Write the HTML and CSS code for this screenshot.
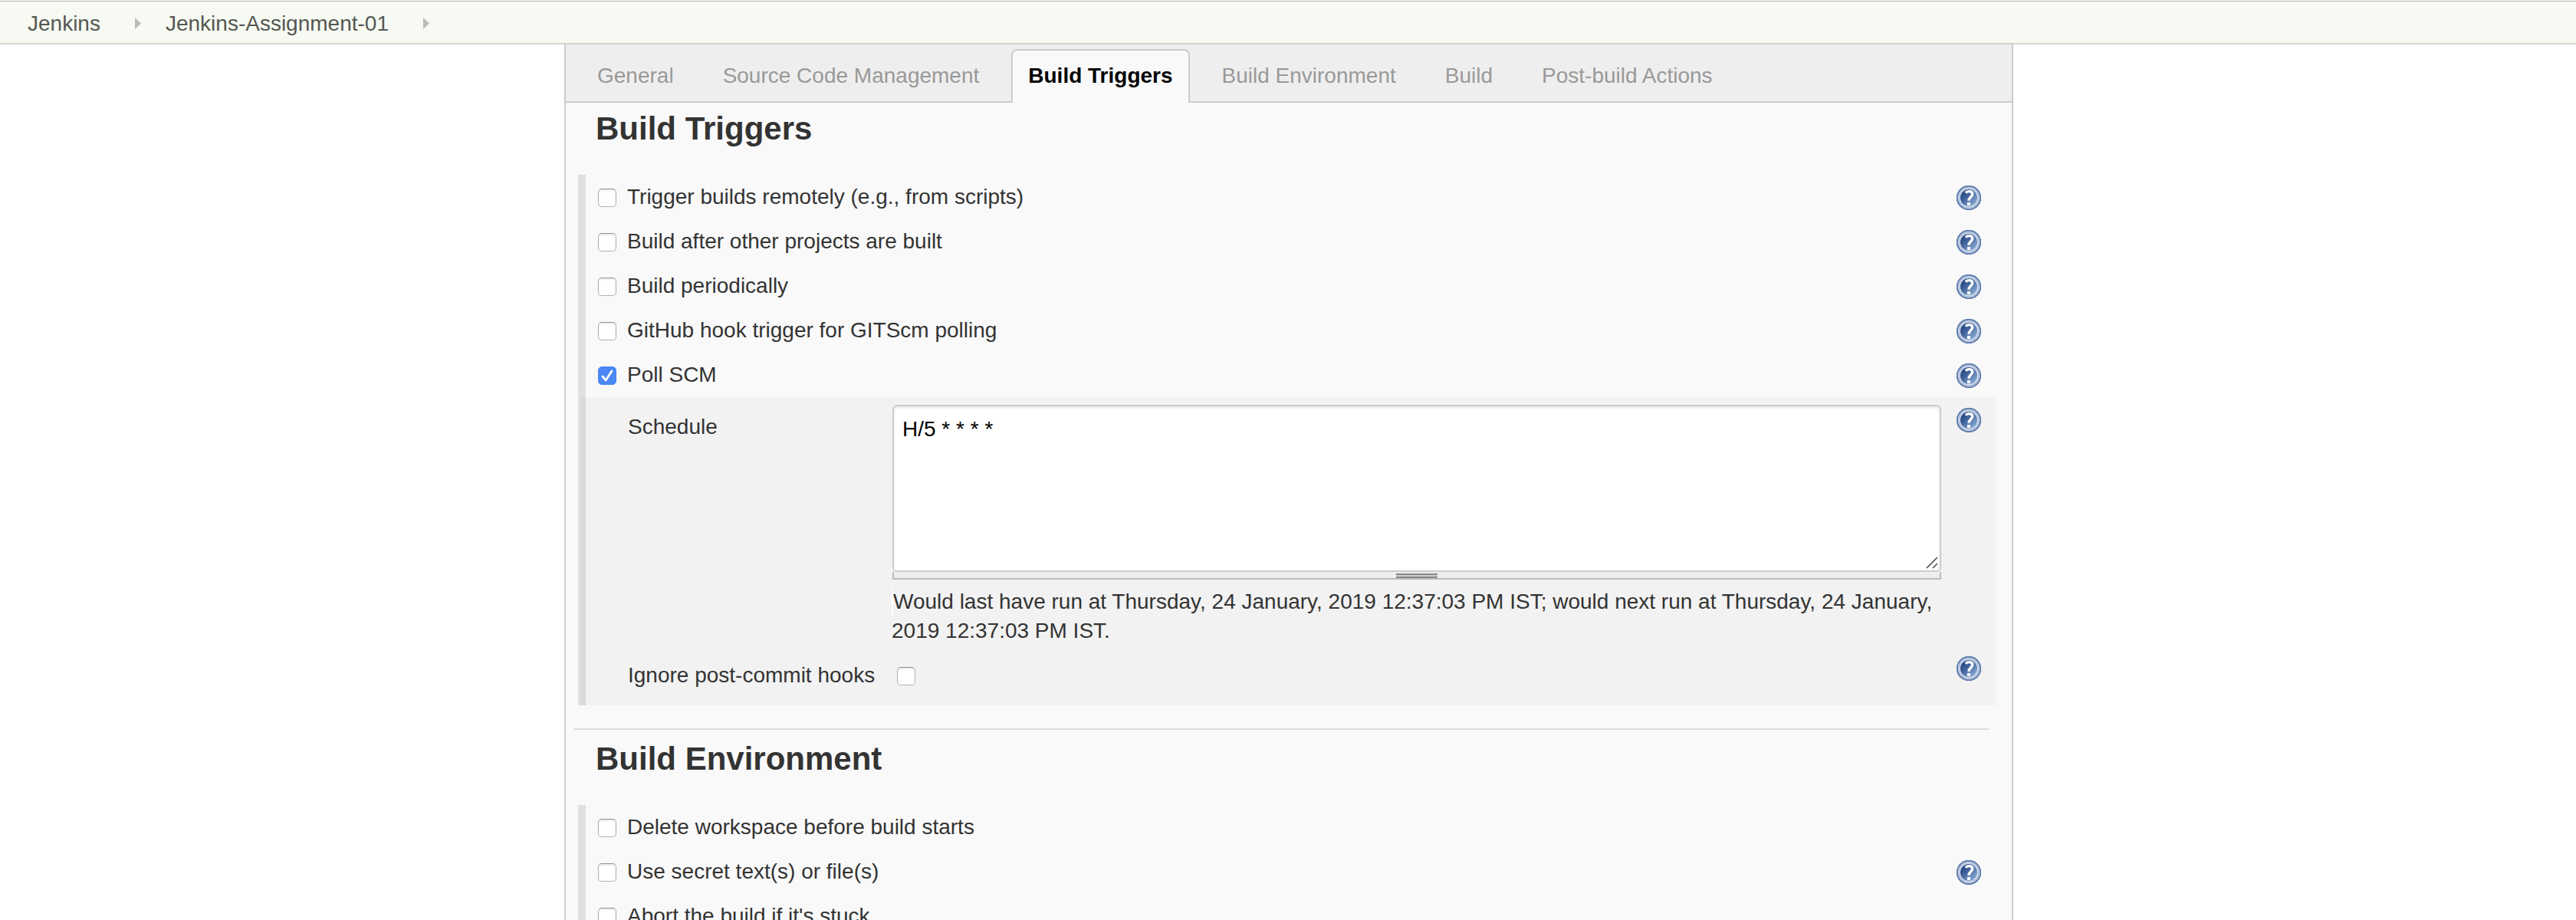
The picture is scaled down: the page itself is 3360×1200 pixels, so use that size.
FILE: index.html
```html
<!DOCTYPE html>
<html lang="en">
<head>
<meta charset="utf-8">
<title>Jenkins-Assignment-01 Config [Jenkins]</title>
<link rel="stylesheet" href="styles.css">
</head>
<body>
<svg class="defs" width="0" height="0" aria-hidden="true">
  <defs>
    <linearGradient id="blue" x1="0.1" y1="0.1" x2="0.9" y2="0.9">
      <stop offset="0" stop-color="#20427f"/>
      <stop offset="0.35" stop-color="#3d5f99"/>
      <stop offset="1" stop-color="#8caed6"/>
    </linearGradient>
    <symbol id="help" viewBox="0 0 32 32">
      <circle cx="16" cy="16" r="16.300" fill="#5d7bae"/>
      <circle cx="16" cy="16" r="14.300" fill="#c9d4e5"/>
      <circle cx="16" cy="16" r="13.200" fill="#8ea5c9"/>
      <circle cx="16" cy="16" r="12.500" fill="#dde5f0"/>
      <circle cx="16" cy="16" r="11.100" fill="url(#blue)"/>
      <path d="M12 9.800C14 6.800 20.800 6.800 20.800 11C20.800 14.600 16 15 16 19.800" fill="none" stroke="#fff" stroke-width="3.400"/>
      <rect x="13.900" y="22" width="4.200" height="4" rx="1" fill="#fff"/>
    </symbol>
    <symbol id="crumb" viewBox="0 0 8 15"><path d="M0 0L8 7.500L0 15Z" fill="#babdb6"/></symbol>
  </defs>
</svg>
<nav class="breadcrumbs">
  <a class="crumb">Jenkins</a>
  <svg class="arrow"><use href="#crumb"/></svg>
  <a class="crumb">Jenkins-Assignment-01</a>
  <svg class="arrow"><use href="#crumb"/></svg>
</nav>
<main class="panel">
  <div class="tabs">
    <a class="tab">General</a>
    <a class="tab">Source Code Management</a>
    <a class="tab active">Build Triggers</a>
    <a class="tab">Build Environment</a>
    <a class="tab">Build</a>
    <a class="tab">Post-build Actions</a>
  </div>
  <section class="section">
    <h2 class="title">Build Triggers</h2>
    <div class="group">
      <div class="row"><span class="check"></span><span class="label">Trigger builds remotely (e.g., from scripts)</span><svg class="help"><use href="#help"/></svg></div>
      <div class="row"><span class="check"></span><span class="label">Build after other projects are built</span><svg class="help"><use href="#help"/></svg></div>
      <div class="row"><span class="check"></span><span class="label">Build periodically</span><svg class="help"><use href="#help"/></svg></div>
      <div class="row"><span class="check"></span><span class="label">GitHub hook trigger for GITScm polling</span><svg class="help"><use href="#help"/></svg></div>
      <div class="row"><span class="check checked"><svg class="tick" viewBox="0 0 24 24"><path d="M6 13L10.200 18L18 6" fill="none" stroke="#fff" stroke-width="2.800" stroke-linecap="round" stroke-linejoin="round"/></svg></span><span class="label">Poll SCM</span><svg class="help"><use href="#help"/></svg></div>
      <div class="nested">
        <div class="field schedule">
          <span class="name">Schedule</span>
          <div class="setting">
            <div class="textarea">H/5 * * * *<svg class="resizer" viewBox="0 0 16 16"><path d="M1 15L15 1M9 15L15 9" stroke="#444" stroke-width="1.500"/></svg></div>
            <div class="handle"><span class="grip"></span></div>
            <p class="message"><span class="mark"></span>Would last have run at Thursday, 24 January, 2019 12:37:03 PM IST; would next run at Thursday, 24 January,<br>2019 12:37:03 PM IST.</p>
          </div>
          <svg class="help"><use href="#help"/></svg>
        </div>
        <div class="field hooks">
          <span class="name">Ignore post-commit hooks</span>
          <div class="setting"><span class="check"></span></div>
          <svg class="help"><use href="#help"/></svg>
        </div>
      </div>
    </div>
  </section>
  <section class="section ruled">
    <h2 class="title">Build Environment</h2>
    <div class="group">
      <div class="row"><span class="check"></span><span class="label">Delete workspace before build starts</span></div>
      <div class="row"><span class="check"></span><span class="label">Use secret text(s) or file(s)</span><svg class="help"><use href="#help"/></svg></div>
      <div class="row"><span class="check"></span><span class="label">Abort the build if it's stuck</span></div>
    </div>
  </section>
</main>
</body>
</html>
```
FILE: styles.css
```css
* { box-sizing: border-box; }
body {
  margin: 0;
  height: 1200px;
  overflow: hidden;
  background: #fff;
  color: #333;
  font: 28px/38px "Liberation Sans", Helvetica, Arial, sans-serif;
}
svg { display: block; flex: none; }
.defs { position: absolute; }
.breadcrumbs {
  display: flex;
  align-items: center;
  height: 58px;
  padding: 5px 0 0 36px;
  background: linear-gradient(#b4b7b0, #b4b7b0) 0 1px / 100% 1px no-repeat #f6faf2;
  border-bottom: 2px solid #d3d7cf;
}
.crumb { color: #555753; }
.arrow { width: 8px; height: 15px; margin: 0 32px 0 45px; }
.panel {
  width: 1890px;
  height: 1142px;
  margin-left: 736px;
  overflow: hidden;
  background: #f9f9f9;
  border: solid #ccc;
  border-width: 0 2px;
}
.tabs {
  display: flex;
  gap: 20px;
  height: 76px;
  padding: 6px 19px 0;
  background: #eee;
  border-bottom: 2px solid #ccc;
}
.tab {
  height: 70px;
  padding: 14px 20px 0;
  border: 2px solid transparent;
  border-bottom: 0;
  color: #999;
  white-space: nowrap;
}
.tab.active {
  background: #f9f9f9;
  border-color: #ccc;
  border-radius: 8px 8px 0 0;
  color: #000;
  font-weight: bold;
}
.section { height: 816px; }
.ruled {
  background: linear-gradient(#ddd, #ddd) 10px 0 / 1846px 2px no-repeat;
}
.title {
  margin: 0;
  height: 94px;
  padding: 9px 0 0 39px;
  font-size: 42px;
  line-height: 50px;
}
.ruled .title { height: 100px; padding-top: 15px; }
.group {
  width: 1850px;
  margin-left: 16px;
  border-left: 10px solid #e0e0e0;
}
.row {
  display: flex;
  align-items: center;
  height: 58px;
  padding: 2px 20px 0 16px;
}
.label { flex: 1; margin: -2px 0 0 14px; }
.help { width: 32px; height: 32px; }
.check {
  display: block;
  flex: none;
  width: 24px;
  height: 24px;
  background: #fff;
  border: 1px solid #b0b0b0;
  border-top-color: #909090;
  border-radius: 5px;
  box-shadow: inset 0 2px 2px rgba(0, 0, 0, 0.08);
}
.checked { background: #4a87f5; border-color: #4a87f5; box-shadow: none; }
.tick { width: 24px; height: 24px; margin: -1px; }
.nested {
  height: 402px;
  margin-left: -6px;
  padding: 10px 20px 0 61px;
  background: rgba(0, 0, 0, 0.026);
}
.field { display: flex; align-items: flex-start; }
.schedule { height: 326px; }
.name { width: 345px; white-space: nowrap; }
.schedule .name { padding-top: 10px; }
.setting { width: 1368px; margin-right: 20px; }
.textarea {
  position: relative;
  height: 218px;
  padding: 11px;
  background: #fff;
  border: 2px solid #ccc;
  border-radius: 6px;
  box-shadow: inset 0 2px 3px rgba(0, 0, 0, 0.1);
  color: #000;
}
.resizer { position: absolute; right: 2px; bottom: 2px; width: 16px; height: 16px; }
.handle {
  height: 10px;
  padding-top: 2px;
  background: #eeeeec;
  border: 2px solid #babdb6;
  border-top: 0;
}
.grip {
  display: block;
  width: 54px;
  height: 6px;
  margin: 0 auto;
  background: #ccc;
  border: solid #888a85;
  border-width: 2px 0;
}
.message { margin: 10px 0 0 -1px; white-space: nowrap; }
.mark { display: inline-block; width: 2px; height: 32px; background: #fff; vertical-align: -8px; }
.schedule .help { margin-top: 4px; }
.hooks { height: 66px; }
.hooks .name { padding-top: 8px; }
.hooks .check { margin: 16px 0 0 6px; }
.hooks .help { margin-top: 2px; }
```
